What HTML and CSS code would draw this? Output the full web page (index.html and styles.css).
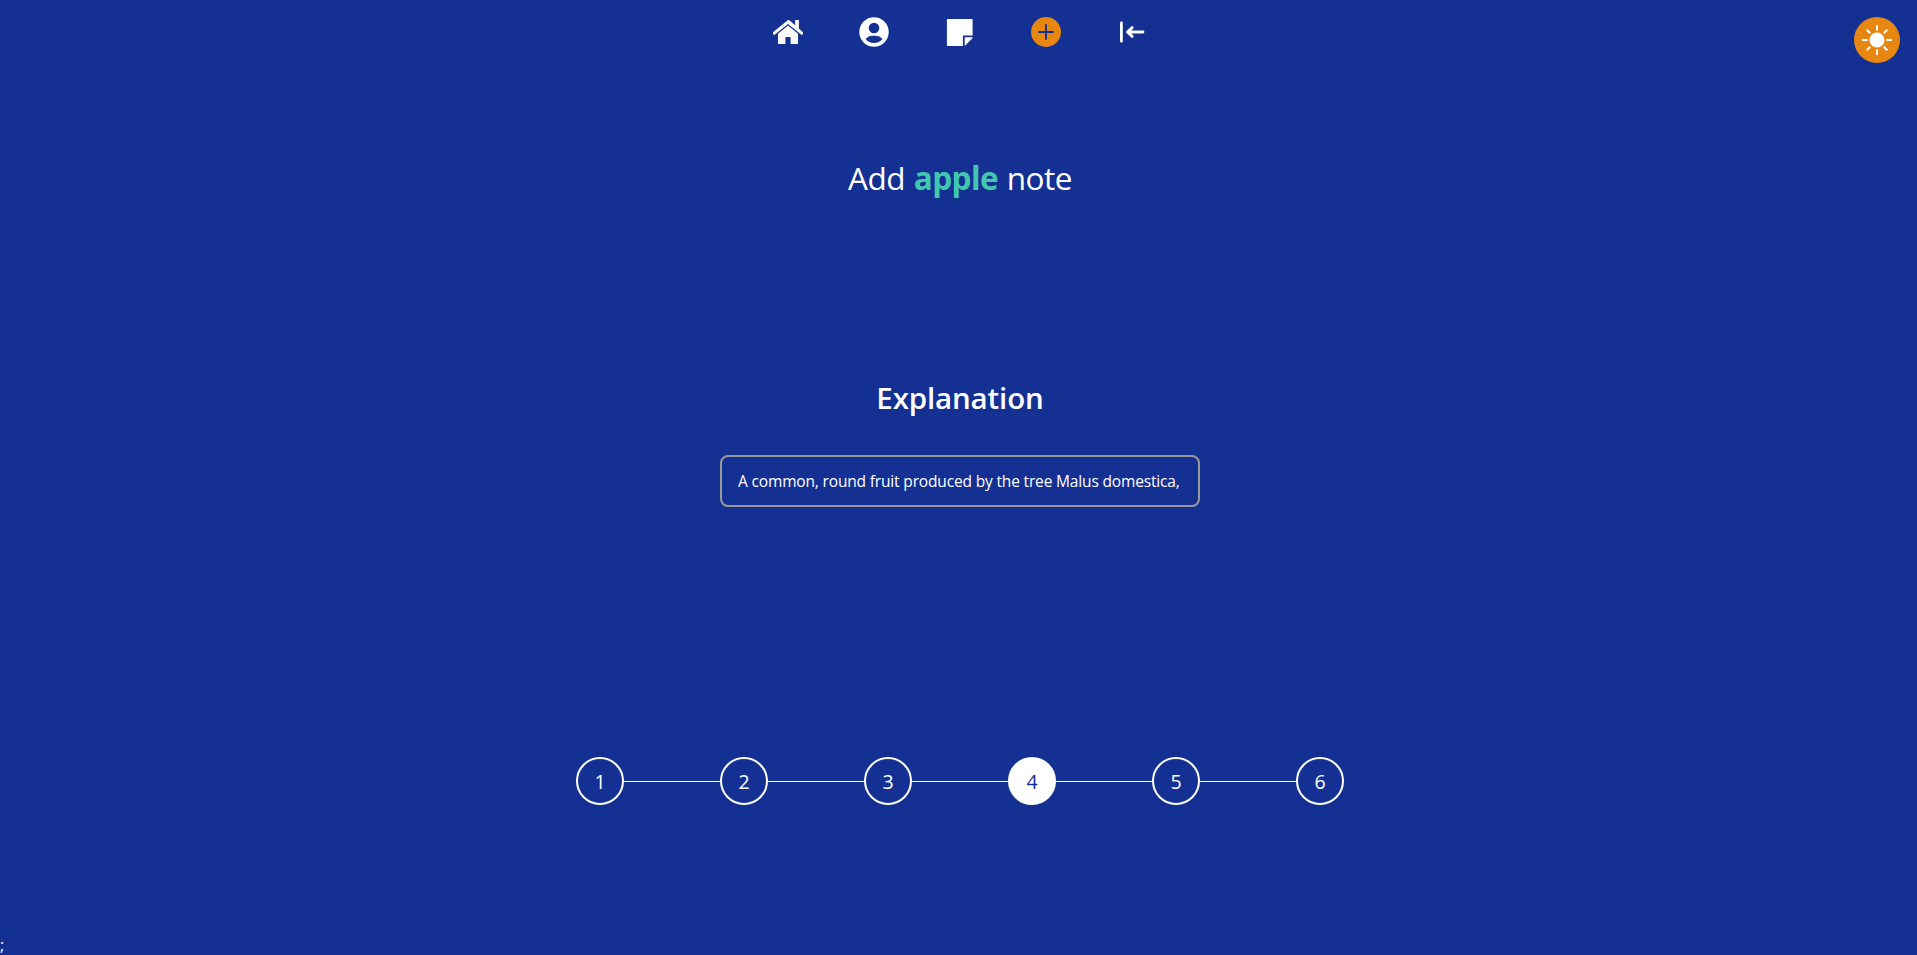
FILE: index.html
```html
<!DOCTYPE html>
<html lang="en">
<head>
<meta charset="utf-8">
<title>Add note</title>
<link rel="stylesheet" href="styles.css">
</head>
<body>
<div class="page">
  <header class="header">
    <nav class="nav">
      <a class="nav-link"><svg viewBox="0 0 30 30"><path d="M15 3 0 15.2V17l1.3.9L15 6.9l13.7 11 1.3-.9v-1.8l-4.1-3.4V3.1h-3.8v5.1L16.7 3.6Q15 2.400 13.300 3.600z"/><path d="M15 8.600 25 16.700V27h-7.400v-6.900h-5.200V27H5V16.700z"/></svg></a>
      <a class="nav-link"><svg viewBox="0 0 30 30"><path fill-rule="evenodd" d="M15 0.300a14.700 14.700 0 1 0 0 29.400 14.700 14.700 0 0 0 0-29.400zM15 5.700a5.300 5.300 0 1 1 0 10.600 5.300 5.300 0 0 1 0-10.600zM6.500 22q3.500-4 8.500-3.200 5-.8 8.500 3.200-3.300 4.100-8.500 4.100T6.500 22z"/></svg></a>
      <a class="nav-link"><svg viewBox="0 0 30 30"><path d="M2.700 2h24.100q.8 0 .8.800V18.500h-9.700V29H2.700q-.8 0-.8-.8V2.800q0-.8.8-.8z"/><path d="M19.700 20.300h8v.6l-7.500 7.500h-.5z"/></svg></a>
      <a class="nav-link"><svg viewBox="0 0 30 30"><circle class="accent" cx="15" cy="15" r="15"/><path class="plus" d="M15 8v14M8 15h14"/></svg></a>
      <a class="nav-link"><svg viewBox="0 0 30 30"><path class="exit" d="M4.400 5.900v18.300M10.800 15h15.200M15.200 10.600 10.400 15l4.800 4.400"/></svg></a>
    </nav>
    <button class="theme" aria-label="Toggle theme"><svg viewBox="0 0 46 46"><circle cx="23" cy="23" r="7.500"/><path class="rays" d="M23 8v5.500M23 32.500V38M8 23h5.500M32.500 23H38M12.600 12.600l3.700 3.700M29.700 29.700l3.700 3.700M33.400 12.600l-3.700 3.700M16.300 29.700l-3.700 3.700"/></svg></button>
  </header>
  <main class="main">
    <h1 class="title">Add <strong class="word">apple</strong> note</h1>
    <h2 class="heading">Explanation</h2>
    <input class="field" type="text" value="A common, round fruit produced by the tree Malus domestica,">
    <div class="steps">
      <span class="step">1</span><span class="line"></span>
      <span class="step">2</span><span class="line"></span>
      <span class="step">3</span><span class="line"></span>
      <span class="step current">4</span><span class="line"></span>
      <span class="step">5</span><span class="line"></span>
      <span class="step">6</span>
    </div>
  </main>
  <footer class="footer">;</footer>
</div>
</body>
</html>
```
FILE: styles.css
```css
* { box-sizing: border-box; }
body {
  margin: 0;
  height: 955px;
  overflow: hidden;
  background: #143093;
  color: #fff;
  font-family: "Open Sans", "Noto Sans", sans-serif;
  font-size: 16px;
}
.page { width: 1920px; height: 955px; display: flex; flex-direction: column; }
.header { height: 64px; display: grid; grid-template-columns: 1fr auto 1fr; padding: 17px 20px 0; align-items: start; }
.nav { grid-column: 2; display: flex; gap: 56px; }
.nav-link { width: 30px; height: 30px; }
svg { display: block; width: 100%; height: 100%; fill: #fff; }
.accent { fill: #e88612; }
.plus { stroke: #143093; stroke-width: 1.9; stroke-linecap: round; }
.exit { fill: none; stroke: #fff; stroke-width: 2.8; stroke-linecap: round; stroke-linejoin: round; }
.theme { justify-self: end; width: 46px; height: 46px; padding: 0; border: 0; border-radius: 50%; background: #e88612; }
.rays { stroke: #fff; stroke-width: 2; }
.main { flex: 1; display: flex; flex-direction: column; align-items: center; }
.title { margin: 92px 0 0; height: 44px; line-height: 44px; font-size: 31.5px; font-weight: 400; letter-spacing: -0.5px; word-spacing: 1px; white-space: nowrap; }
.word { color: #41c7ae; font-weight: 700; letter-spacing: -0.55px; }
.heading { margin: 176px 0 0; height: 44px; line-height: 44px; font-size: 29.5px; font-weight: 600; letter-spacing: -0.15px; }
.field {
  width: 480px; height: 52px; margin-top: 35px; padding: 0 16px;
  border: 2px solid #999; border-radius: 8px; background: transparent; color: #fff;
  font-family: inherit; font-size: 15.5px; letter-spacing: -0.16px; outline: 0;
}
.steps { display: flex; align-items: center; margin-top: 250px; }
.step { width: 48px; height: 48px; border: 2px solid #fff; border-radius: 50%; font-size: 19.5px; line-height: 46px; text-align: center; }
.current { background: #fff; color: #143093; }
.line { width: 96px; height: 1px; background: #fff; margin-top: 1px; }
.footer { height: 21px; line-height: 23px; }
```
